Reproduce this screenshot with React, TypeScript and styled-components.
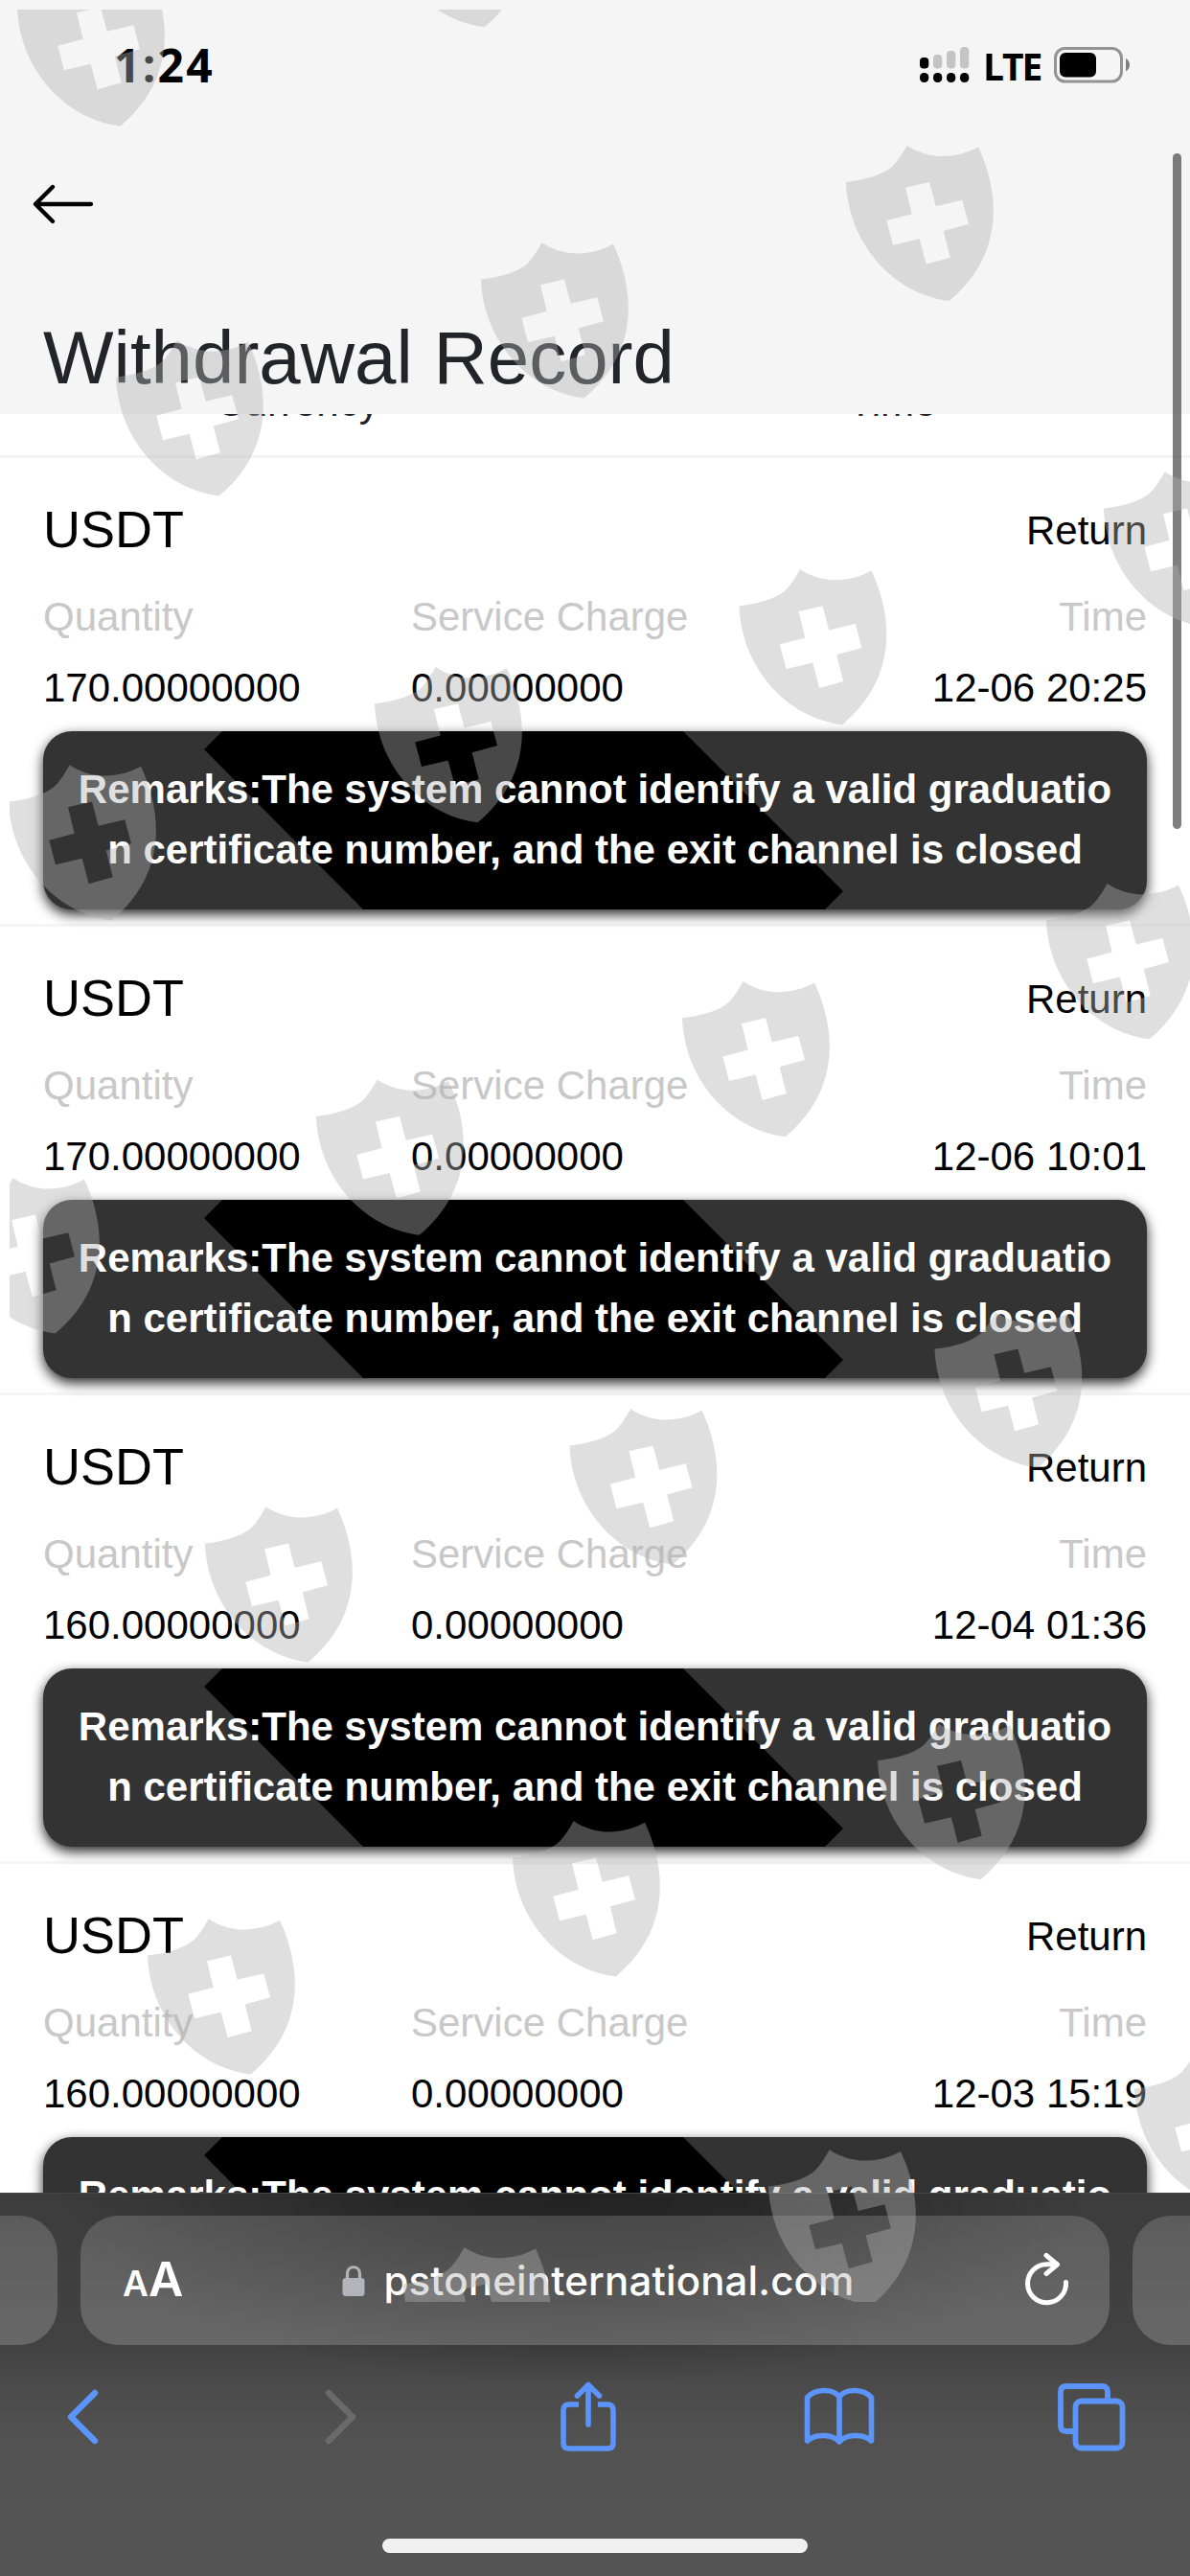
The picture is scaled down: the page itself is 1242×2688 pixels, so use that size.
import React from 'react';
import styled, { createGlobalStyle } from 'styled-components';

const GlobalStyle = createGlobalStyle`
  html, body { margin: 0; padding: 0; background: #fff; }
  *, *::before, *::after { box-sizing: border-box; }
`;

const Screen = styled.div`
  position: relative;
  display: flex;
  flex-direction: column;
  width: 1242px;
  height: 2688px;
  overflow: hidden;
  background: #fff;
  font-family: 'Liberation Sans', Arial, sans-serif;
`;

const Header = styled.header`
  display: flex;
  flex-direction: column;
  height: 432px;
  background: #f5f5f5;
`;

const StatusBar = styled.div`
  display: flex;
  align-items: center;
  justify-content: space-between;
  height: 136px;
  padding: 0 61px 0 119px;
  font-family: 'Open Sans', 'Noto Sans', sans-serif;
  font-weight: 700;
  color: #000;
`;

const Clock = styled.span`
  font-size: 48px;
  letter-spacing: 2.2px;
  line-height: 1;
`;

const StatusIcons = styled.div`
  display: flex;
  align-items: center;
  height: 40px;
`;

const Network = styled.span`
  width: 56px;
  margin: 0 18px 0 14px;
  font-size: 39px;
  line-height: 1;
  letter-spacing: -2px;
  white-space: nowrap;
`;

const NavRow = styled.div`
  display: flex;
  align-items: center;
  height: 154px;
  padding-left: 34px;
`;

const Title = styled.h1`
  margin: 25px 0 0 45px;
  font-size: 78px;
  line-height: 117px;
  font-weight: 400;
  color: #212529;
`;

const List = styled.main`
  height: 1856px;
  overflow: hidden;
  background: #fff;
`;

const TableHead = styled.div`
  display: flex;
  align-items: flex-end;
  height: 46px;
  padding-bottom: 24px;
  border-bottom: 3px solid #f5f5f5;
  text-align: center;
  font-size: 42px;
  line-height: 63px;
  color: #212529;
`;

const HeadCell = styled.span`
  flex: 1;
`;

const Record = styled.article`
  display: flex;
  flex-direction: column;
  height: 489px;
  padding: 34px 45px 15px;
  border-bottom: 3px solid #f5f5f5;
  font-size: 42px;
  line-height: 63px;
  color: #000;
`;

const RecordHead = styled.div`
  display: flex;
  align-items: center;
  justify-content: space-between;
  height: 81px;
  margin-bottom: 19px;
`;

const Currency = styled.h2`
  margin: 0;
  font-size: 54px;
  line-height: 81px;
  font-weight: 400;
`;

const Status = styled.span`
  padding-top: 2px;
`;

const Fields = styled.dl`
  display: grid;
  grid-template-columns: repeat(3, 1fr);
  margin: 0 0 14px;
`;

const Field = styled.div<{ $end?: boolean }>`
  display: flex;
  flex-direction: column;
  gap: 11px;
  text-align: ${(p) => (p.$end ? 'right' : 'left')};
`;

const Label = styled.dt`
  color: #c8c8c8;
`;

const Value = styled.dd`
  margin: 0;
`;

const Remarks = styled.p`
  position: relative;
  flex: none;
  height: 186px;
  margin: 0;
  padding: 29px 0 31px;
  border-radius: 30px;
  background: #333;
  box-shadow: 0 5px 13px rgba(0, 0, 0, 0.85);
  color: #fff;
  font-weight: 700;
  text-align: center;

  &::before {
    content: '';
    position: absolute;
    inset: 0;
    background: #000;
    clip-path: polygon(168px 19px, 187px 0, 668px 0, 835px 167px, 816px 186px, 334px 186px);
  }
`;

const RemarkLine = styled.span`
  position: relative;
  display: block;
  white-space: nowrap;
`;

const BrowserBar = styled.footer`
  display: flex;
  flex-direction: column;
  height: 400px;
  background:
    radial-gradient(ellipse 540px 200px at 48% 0, rgba(0, 0, 0, 0.42), rgba(0, 0, 0, 0.34) 35%, transparent),
    linear-gradient(#3c3c3c 0, #3d3d3d 24px, #424242 158px, #4b4b4b 200px, #525252 260px, #555 400px);
  border-top: 1px solid #454545;
`;

const AddressRow = styled.div`
  display: flex;
  justify-content: center;
  gap: 24px;
  margin-top: 23px;
  height: 135px;
`;

const Pill = styled.div`
  flex: none;
  width: 1074px;
  border-radius: 40px;
  background: linear-gradient(rgba(255, 255, 255, 0.16), rgba(255, 255, 255, 0.2));
`;

const Address = styled(Pill)`
  display: grid;
  grid-template-columns: 200px 1fr 200px;
  align-items: center;
  color: #fff;
  font-family: Inter, sans-serif;
`;

const TextSize = styled.span`
  display: flex;
  align-items: baseline;
  padding: 2px 0 0 44px;
  font-weight: 600;
  line-height: 60px;
`;

const Letter = styled.span<{ $size: number }>`
  font-size: ${(p) => p.$size}px;
`;

const Site = styled.span`
  display: flex;
  align-items: center;
  justify-content: center;
  gap: 19px;
  padding-left: 7px;
  font-size: 42px;
  font-weight: 500;
  letter-spacing: 0.15px;
`;

const ReloadSlot = styled.span`
  display: flex;
  justify-content: flex-end;
  padding-right: 40px;
`;

const Toolbar = styled.nav`
  display: flex;
  align-items: center;
  justify-content: space-between;
  height: 150px;
  padding: 0 63px 0 46px;
`;

const Tool = styled.span<{ $shift?: number }>`
  display: flex;
  justify-content: center;
  width: 80px;
  padding-left: ${(p) => p.$shift ?? 0}px;
`;

const HomeIndicator = styled.div`
  width: 444px;
  height: 15px;
  margin: 52px 0 0 399px;
  border-radius: 8px;
  background: #f0f0f0;
`;

const ScrollThumb = styled.div`
  position: absolute;
  left: 1224px;
  top: 160px;
  width: 9px;
  height: 705px;
  border-radius: 5px;
  background: rgba(0, 0, 0, 0.5);
`;

const Watermark = styled.svg`
  position: absolute;
  left: 10px;
  top: 10px;
  pointer-events: none;
`;

const blue = '#5b95fb';

const records = [
  { quantity: '170.00000000', time: '12-06 20:25' },
  { quantity: '170.00000000', time: '12-06 10:01' },
  { quantity: '160.00000000', time: '12-04 01:36' },
  { quantity: '160.00000000', time: '12-03 15:19' },
];

const shields: [number, number][] = [
  [-865, -182.5], [-485, -285.8],
  [0, 0], [-381, 101.5], [-762, 203.5],
  [269, 340.5], [-111.5, 442.3], [-492, 544.3], [-874, 646.5],
  [209, 770.3], [-171, 872.2], [-553, 974.8], [-933, 1077.5],
  [92.5, 1217.5], [-288.5, 1318.5], [-669, 1420.5],
  [33, 1647], [-348, 1748.5], [-729, 1850.5],
  [301, 1989.6], [-81, 2091.6], [-462, 2193.3],
];

const shieldPath =
  'M86.7 21.7C108 36 136 37 161 23.3C181.5 67 191.5 133 130.7 184C71.5 177 25 123 23 60C48 57.5 65 50 72 43C79 35.5 83 28 86.7 21.7Z' +
  'M85 65.7L91.7 93.3L65.3 100.3L72 125.7L99.7 119.3L106.7 145.7L131.7 138.7L124.7 111L151 103.7L144.3 78.7L116.7 85.3L110 60Z';

const Shields = () => (
  <Watermark width="1232" height="2392" viewBox="10 10 1232 2392">
    {shields.map(([x, y]) => (
      <path
        key={`${x},${y}`}
        d={shieldPath}
        transform={`translate(${860 + x} ${130 + y})`}
        fill="#b0b0b0"
        fillOpacity={0.408}
        fillRule="evenodd"
      />
    ))}
  </Watermark>
);

const SignalIcon = () => (
  <svg width="52" height="40" viewBox="0 0 52 40">
    {[0, 14, 28, 42].map((x, i) => (
      <g key={x}>
        <rect
          x={x}
          y={[12, 9, 5, 1][i]}
          width="9.3"
          height={[11.4, 14.4, 18.4, 22.4][i]}
          rx="4"
          fill={i === 0 ? '#000' : '#c4c4c4'}
        />
        <rect x={x} y="28" width="9.3" height="10" rx="4.4" fill="#000" />
      </g>
    ))}
  </svg>
);

const BatteryIcon = () => (
  <svg width="81" height="40" viewBox="0 0 81 40">
    <rect x="1.5" y="2.5" width="69" height="34.5" rx="10" fill="none" stroke="#939393" strokeWidth="3" />
    <rect x="6" y="7" width="38" height="25.5" rx="6" fill="#000" />
    <path d="M75 13Q79 15.500 79 19.800T75 26.500Z" fill="#808080" />
  </svg>
);

const BackArrow = () => (
  <svg width="64" height="44" viewBox="0 0 64 44" fill="none" stroke="#000" strokeWidth="4.300" strokeLinecap="round" strokeLinejoin="round">
    <path d="M61 22H3M21 4L3 22L21 40" />
  </svg>
);

const LockIcon = () => (
  <svg width="24" height="34" viewBox="0 0 24 34">
    <path d="M5.500 16V9.500C5.500 0.500 18.500 0.500 18.500 9.500V16" fill="none" stroke="#b3b3bb" strokeWidth="3.200" />
    <rect x="0.500" y="14" width="23" height="19" rx="3.500" fill="#b3b3bb" />
  </svg>
);

const ReloadIcon = () => (
  <svg width="50" height="60" viewBox="0 0 50 60" fill="none" stroke="#fff" strokeWidth="5" strokeLinecap="round" strokeLinejoin="round">
    <path d="M44.500 31.500A20 20 0 1 1 24.500 12.800H35" />
    <path d="M24 3.500L35.500 13L24 22.500" />
  </svg>
);

const Chevron = ({ forward }: { forward?: boolean }) => (
  <svg width="40" height="60" viewBox="0 0 40 60" fill="none" stroke={forward ? '#6a6a6a' : blue} strokeWidth="6.500" strokeLinecap="round" strokeLinejoin="round">
    <path d={forward ? 'M8 5L33 30L8 55' : 'M33 5L8 30L33 55'} />
  </svg>
);

const ShareIcon = () => (
  <svg width="60" height="76" viewBox="0 0 60 76" fill="none" stroke={blue} strokeWidth="5.600" strokeLinecap="round" strokeLinejoin="round">
    <path d="M20 25H10Q4 25 4 31V65Q4 71 10 71H50Q56 71 56 65V31Q56 25 50 25H40" strokeLinecap="butt" />
    <path d="M30 46V5M18.500 16L30 4.500L41.500 16" />
  </svg>
);

const BookIcon = () => (
  <svg width="76" height="62" viewBox="0 0 76 62" fill="none" stroke={blue} strokeWidth="5.600" strokeLinecap="round" strokeLinejoin="round">
    <path d="M38 57C31 49 14 48 4.500 56V11C12 1.500 31 1 38 10C45 1 64 1.500 71.500 11V56C62 48 45 49 38 57ZM38 10V57" />
  </svg>
);

const TabsIcon = () => (
  <svg width="72" height="72" viewBox="0 0 72 72" fill="none" stroke={blue} strokeWidth="5.800">
    <path d="M17 51H10Q4 51 4 45V10Q4 4 10 4H47Q53 4 53 10V17" />
    <rect x="19.500" y="19.500" width="49" height="49" rx="6" />
  </svg>
);

export default function App() {
  return (
    <>
      <GlobalStyle />
      <Screen>
        <Header>
          <StatusBar>
            <Clock>1:24</Clock>
            <StatusIcons>
              <SignalIcon />
              <Network>LTE</Network>
              <BatteryIcon />
            </StatusIcons>
          </StatusBar>
          <NavRow>
            <BackArrow />
          </NavRow>
          <Title>Withdrawal Record</Title>
        </Header>
        <List>
          <TableHead>
            <HeadCell>Currency</HeadCell>
            <HeadCell>Time</HeadCell>
          </TableHead>
          {records.map((r) => (
            <Record key={r.time}>
              <RecordHead>
                <Currency>USDT</Currency>
                <Status>Return</Status>
              </RecordHead>
              <Fields>
                <Field>
                  <Label>Quantity</Label>
                  <Value>{r.quantity}</Value>
                </Field>
                <Field>
                  <Label>Service Charge</Label>
                  <Value>0.00000000</Value>
                </Field>
                <Field $end>
                  <Label>Time</Label>
                  <Value>{r.time}</Value>
                </Field>
              </Fields>
              <Remarks>
                <RemarkLine>Remarks:The system cannot identify a valid graduatio</RemarkLine>
                <RemarkLine>n certificate number, and the exit channel is closed</RemarkLine>
              </Remarks>
            </Record>
          ))}
        </List>
        <BrowserBar>
          <AddressRow>
            <Pill />
            <Address>
              <TextSize>
                <Letter $size={37}>A</Letter>
                <Letter $size={50}>A</Letter>
              </TextSize>
              <Site>
                <LockIcon />
                <span>pstoneinternational.com</span>
              </Site>
              <ReloadSlot>
                <ReloadIcon />
              </ReloadSlot>
            </Address>
            <Pill />
          </AddressRow>
          <Toolbar>
            <Tool><Chevron /></Tool>
            <Tool $shift={12}><Chevron forward /></Tool>
            <Tool $shift={2}><ShareIcon /></Tool>
            <Tool><BookIcon /></Tool>
            <Tool><TabsIcon /></Tool>
          </Toolbar>
          <HomeIndicator />
        </BrowserBar>
        <ScrollThumb />
        <Shields />
      </Screen>
    </>
  );
}
